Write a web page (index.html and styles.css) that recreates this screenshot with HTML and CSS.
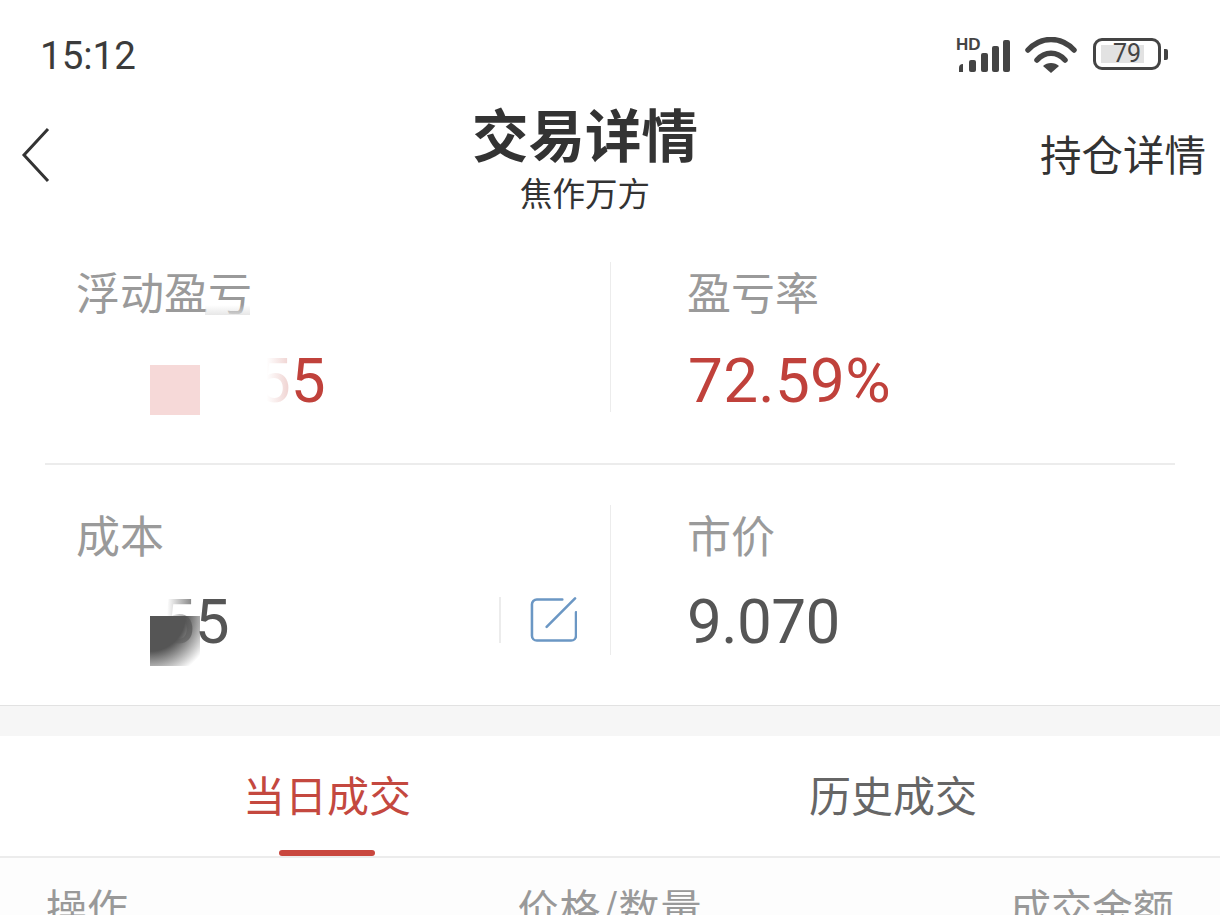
FILE: index.html
```html
<!DOCTYPE html>
<html lang="zh-CN">
<head>
    <meta charset="UTF-8">
    <meta name="viewport" content="width=device-width, initial-scale=1.0">
    <link rel="stylesheet" href="styles.css">
    <title>交易详情</title>
</head>
<body>
<div class="page">
    <div class="status-bar">
        <span class="clock">15:12</span>
        <div class="status-icons">
            <svg class="ico-signal" width="56" height="36" viewBox="0 0 56 36">
                <text x="1" y="13" class="hd">HD</text>
                <path d="M4 31a4 4 0 0 1 4-4h0v8H4z" fill="#444"/>
                <rect x="14" y="23" width="7" height="12" rx="2" fill="#444"/>
                <rect x="26" y="16" width="7" height="19" rx="2" fill="#444"/>
                <rect x="37" y="9" width="7" height="26" rx="2" fill="#444"/>
                <rect x="48" y="3" width="7" height="32" rx="2" fill="#444"/>
            </svg>
            <svg class="ico-wifi" width="52" height="37" viewBox="0 0 52 37">
                <path d="M3 13C16 -1 36 -1 49 13" fill="none" stroke="#444" stroke-width="5.5" stroke-linecap="round"/>
                <path d="M12 23C20 14 32 14 40 23" fill="none" stroke="#444" stroke-width="5.5" stroke-linecap="round"/>
                <path d="M26 36l-8-7c4-4 12-4 16 0z" fill="#444"/>
            </svg>
            <div class="battery">
                <div class="battery-body">
                    <div class="battery-fill"></div>
                    <span class="battery-num">79</span>
                </div>
                <div class="battery-cap"></div>
            </div>
        </div>
    </div>

    <div class="header">
        <div class="back">
            <svg width="30" height="56" viewBox="0 0 30 56">
                <path d="M27 2L3 28l24 26" fill="none" stroke="#333" stroke-width="3"/>
            </svg>
        </div>
        <div class="title-box">
            <div class="title">交易详情</div>
            <div class="subtitle">焦作万方</div>
        </div>
        <div class="header-link">持仓详情</div>
    </div>

    <div class="stats">
        <div class="stat-row">
            <div class="stat stat-left">
                <div class="stat-label">浮动盈亏</div>
                <div class="stat-value red"><span class="hidden-part hp-red"></span><span class="fade fade-red">5</span>5</div>
                <div class="smudge"></div>
                <div class="mosaic mosaic-pink"></div>
            </div>
            <div class="stat stat-right">
                <div class="stat-label">盈亏率</div>
                <div class="stat-value red rate">72.59%</div>
            </div>
        </div>
        <div class="stat-line"></div>
        <div class="stat-row stat-row-low">
            <div class="stat stat-left">
                <div class="stat-label">成本</div>
                <div class="stat-value"><span class="hidden-part hp-dark"></span><span class="fade fade-dark">5</span>5
                    <div class="edit-box">
                        <svg width="48" height="46" viewBox="0 0 48 46">
                            <path d="M33 2H7a5 5 0 0 0-5 5v32a5 5 0 0 0 5 5h35a5 5 0 0 0 5-5V15" fill="none" stroke="#6b97c4" stroke-width="2.6" stroke-linecap="round"/>
                            <path d="M17 30L46 1" fill="none" stroke="#6b97c4" stroke-width="2.6" stroke-linecap="round"/>
                        </svg>
                    </div>
                </div>
                <div class="mosaic mosaic-dark"></div>
            </div>
            <div class="stat stat-right">
                <div class="stat-label">市价</div>
                <div class="stat-value price">9.070</div>
            </div>
        </div>
    </div>

    <div class="gap-band"></div>

    <div class="tabs">
        <div class="tab active">当日成交</div>
        <div class="tab">历史成交</div>
    </div>

    <div class="table-head">
        <span>操作</span>
        <span class="col-mid">价格/数量</span>
        <span class="col-end">成交金额</span>
    </div>
</div>
</body>
</html>
```

FILE: styles.css
```css
html, body { margin: 0; padding: 0; background: #fff; }
.page { width: 1220px; height: 915px; overflow: hidden; position: relative; font-family: "Noto Sans CJK SC", "Noto Sans", sans-serif; color: #333; }

.status-bar { height: 100px; display: flex; justify-content: space-between; align-items: flex-start; padding: 0 52px 0 40px; box-sizing: border-box; }
.clock { font-family: Roboto, sans-serif; font-size: 38.5px; line-height: 46px; margin-top: 33px; color: #3b3b3b; }
.status-icons { display: flex; align-items: flex-start; margin-top: 37px; }
.ico-wifi { margin-left: 14px; }
.hd { font-family: "Liberation Sans", sans-serif; font-size: 17px; font-weight: bold; fill: #444; }
.battery { display: flex; align-items: center; margin-left: 16px; margin-top: 1px; }
.battery-body { width: 68px; height: 32px; border: 3px solid #444; border-radius: 9px; position: relative; box-sizing: border-box; padding: 4px 5px; }
.battery-fill { width: 43px; height: 18px; background: #e2e2e2; }
.battery-num { position: absolute; left: 17px; top: 0; font-family: Roboto, sans-serif; font-size: 25px; line-height: 26px; color: #444; }
.battery-cap { width: 4px; height: 11px; background: #444; border-radius: 0 2px 2px 0; margin-left: 3px; }

.header { height: 130px; display: grid; grid-template-columns: 360px 450px 1fr; }
.back { padding: 27px 0 0 21px; }
.title-box { text-align: center; }
.title { font-size: 56.5px; line-height: 62px; font-weight: 700; margin-top: 1px; color: #333; }
.subtitle { font-size: 32.5px; line-height: 44px; margin-top: 7px; color: #333; }
.header-link { font-size: 41.5px; line-height: 50px; text-align: right; padding: 28px 14px 0 0; color: #333; white-space: nowrap; }

.stats { padding: 32px 45px 0; height: 476px; box-sizing: border-box; border-bottom: 1px solid #e2e2e2; }
.stat-row { display: grid; grid-template-columns: 565px 565px; grid-template-rows: 150px; height: 150px; }
.stat { position: relative; box-sizing: border-box; min-height: 0; }
.stat-left { padding-left: 31px; padding-right: 33px; }
.stat-right { padding-left: 76px; border-left: 1px solid #ececec; }
.stat-label { font-size: 44px; line-height: 60px; margin-top: -1px; color: #9a9a9a; }
.stat-value { font-family: Roboto, sans-serif; font-size: 62px; line-height: 72px; margin-top: 24px; color: #555; display: flex; align-items: center; white-space: nowrap; }
.stat-row-low .stat-value { margin-top: 22px; }
.stat-value.red { color: #c0413b; }
.stat-value.rate { letter-spacing: 0.3px; margin-left: 1px; }
.stat-value.price { letter-spacing: -0.6px; }
.stat-line { height: 2px; background: #ececec; margin: 51px 0 40px; }

.hidden-part { display: inline-block; }
.hp-red { width: 180px; }
.hp-dark { width: 84px; }
.fade { background-clip: text; -webkit-background-clip: text; color: transparent; }
.fade-red { background-image: linear-gradient(90deg, #fff 30%, #eecfcd 100%); }
.fade-dark { background-image: linear-gradient(90deg, #fff 20%, #777 100%); }

.smudge { position: absolute; left: 160px; top: 43px; width: 45px; height: 10px; background: linear-gradient(to bottom, rgba(225, 225, 225, 0), rgba(225, 225, 225, 0.8)); }
.mosaic { position: absolute; width: 50px; height: 50px; left: 105px; top: 103px; }
.mosaic-pink { background: #f6d9d8; }
.mosaic-dark { top: 111px; background: radial-gradient(circle at 0 0, #555 50%, rgba(85, 85, 85, 0) 90%); }

.edit-box { margin-left: auto; margin-top: -4px; width: 78px; height: 46px; border-left: 2px solid #ececec; box-sizing: border-box; padding-left: 29px; display: flex; }

.gap-band { height: 30px; background: #f6f6f6; }

.tabs { display: grid; grid-template-columns: 1fr 1fr; padding: 0 44px; height: 120px; border-bottom: 2px solid #ececec; }
.tab { font-size: 42px; line-height: 116px; text-align: center; color: #666; position: relative; }
.tab.active { color: #c4483f; }
.tab.active::after { content: ""; position: absolute; left: 235px; bottom: 0; width: 96px; height: 6px; background: #c9473e; border-radius: 3px; }

.table-head { display: grid; grid-template-columns: 1fr auto 1fr; padding: 23px 46px 0; font-size: 41px; line-height: 50px; color: #999; background: #fdfdfd; height: 100px; box-sizing: border-box; }
.col-mid { letter-spacing: 1px; }
.col-end { text-align: right; }
```
